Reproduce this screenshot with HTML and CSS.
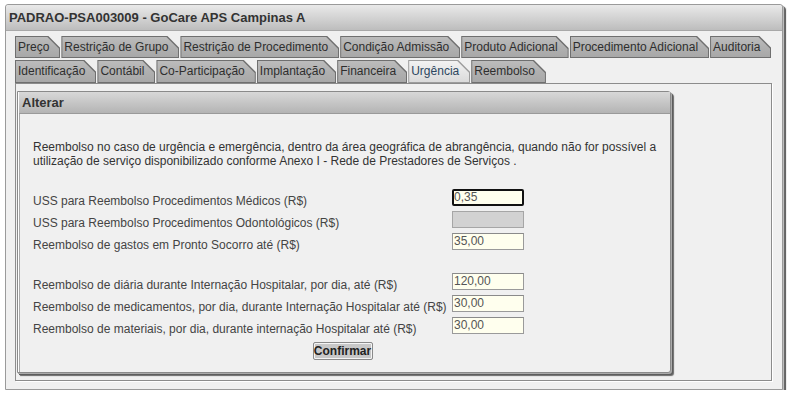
FILE: index.html
```html
<!DOCTYPE html>
<html lang="pt-BR">
<head>
<meta charset="utf-8">
<title>PADRAO-PSA003009</title>
<link rel="stylesheet" href="styles.css">
</head>
<body>
<div class="window">
  <div class="titlebar">PADRAO-PSA003009 - GoCare APS Campinas A</div>
  <div class="wbody">
    <div class="tabrow">
      <div class="tab"><span>Preço</span></div>
      <div class="tab"><span>Restrição de Grupo</span></div>
      <div class="tab"><span>Restrição de Procedimento</span></div>
      <div class="tab"><span>Condição Admissão</span></div>
      <div class="tab"><span>Produto Adicional</span></div>
      <div class="tab"><span>Procedimento Adicional</span></div>
      <div class="tab"><span>Auditoria</span></div>
    </div>
    <div class="tabrow">
      <div class="tab"><span>Identificação</span></div>
      <div class="tab"><span>Contábil</span></div>
      <div class="tab"><span>Co-Participação</span></div>
      <div class="tab"><span>Implantação</span></div>
      <div class="tab"><span>Financeira</span></div>
      <div class="tab active"><span>Urgência</span></div>
      <div class="tab"><span>Reembolso</span></div>
    </div>
    <div class="panel">
      <div class="dialog">
        <div class="dhead">Alterar</div>
        <div class="dbody">
          <p class="intro">Reembolso no caso de urgência e emergência, dentro da área geográfica de abrangência, quando não for possível a utilização de serviço disponibilizado conforme Anexo I - Rede de Prestadores de Serviços .</p>
          <table class="form">
            <tr><td class="lbl">USS para Reembolso Procedimentos Médicos (R$)</td><td><div class="inp focus">0,35</div></td></tr>
            <tr><td class="lbl">USS para Reembolso Procedimentos Odontológicos (R$)</td><td><div class="inp disabled"></div></td></tr>
            <tr><td class="lbl">Reembolso de gastos em Pronto Socorro até (R$)</td><td><div class="inp">35,00</div></td></tr>
            <tr class="spacer"><td></td><td></td></tr>
            <tr><td class="lbl">Reembolso de diária durante Internação Hospitalar, por dia, até (R$)</td><td><div class="inp">120,00</div></td></tr>
            <tr><td class="lbl">Reembolso de medicamentos, por dia, durante Internação Hospitalar até (R$)</td><td><div class="inp">30,00</div></td></tr>
            <tr><td class="lbl">Reembolso de materiais, por dia, durante internação Hospitalar até (R$)</td><td><div class="inp">30,00</div></td></tr>
          </table>
          <div class="actions"><button class="btn">Confirmar</button></div>
        </div>
      </div>
    </div>
  </div>
</div>
</body>
</html>
```

FILE: styles.css
```css
* { box-sizing: border-box; }
html, body { margin: 0; padding: 0; background: #fff; }
body {
  font-family: "Liberation Sans", Arial, sans-serif;
  font-size: 12px;
  color: #333;
}
.window {
  margin: 4px 0 0 5px;
  width: 778px;
  height: 386px;
  border: 1px solid #9a9a9a;
  border-radius: 3px 3px 0 0;
  background: #f0f0f0;
  box-shadow: 1px 1px 0 #bdbdbd, 2px 2px 0 #6a6a6a, 3px 3px 1px #555;
  display: flex;
  flex-direction: column;
}
.titlebar {
  height: 26px;
  line-height: 26px;
  padding-left: 3px;
  font-size: 13px;
  font-weight: bold;
  color: #333;
  background: linear-gradient(#e9e9e9, #cfcfcf 60%, #bdbdbd);
  border-bottom: 1px solid #a8a8a8;
  border-radius: 3px 3px 0 0;
}
.wbody {
  flex: 1;
  padding: 5px 10px 8px 9px;
  display: flex;
  flex-direction: column;
}
.tabrow {
  display: flex;
  gap: 1px;
  height: 22px;
}
.tabrow + .tabrow { margin-top: 2px; height: 23px; }
.tab {
  background: #6f6f6f;
  clip-path: polygon(0 0, calc(100% - 12px) 0, 100% 12px, 100% 100%, 0 100%);
  padding: 1px;
  display: flex;
}
.tab span {
  display: block;
  flex: 1;
  padding: 0 10px 0 2px;
  line-height: 20px;
  color: #2e2e2e;
  background: linear-gradient(#bcbcbc, #b0b0b0 50%, #a8a8a8);
  clip-path: polygon(0 0, calc(100% - 12px) 0, 100% 12px, 100% 100%, 0 100%);
  white-space: nowrap;
}
.tabrow + .tabrow .tab span { line-height: 21px; }
.tab.active { background: #9c9c9c; }
.tab.active span {
  background: linear-gradient(#f2f2f2, #e4e4e4 60%, #dadada);
  color: #2c4760;
}
.panel {
  flex: 1;
  border: 1px solid #8c8c8c;
  box-shadow: 1px 1px 0 #fff;
  background: #f0f0f0;
  padding: 7px 0 0 1px;
}
.dialog {
  width: 654px;
  height: 282px;
  border: 1px solid #8a8a8a;
  border-radius: 0 3px 3px 0;
  background: #f0f0f0;
  box-shadow: inset 1px 1px 0 #fdfdfd, inset 2px 0 0 #a0a0a0, 1px 1px 0 #aaa, 2px 2px 0 #5c5c5c, 3px 3px 1px #6a6a6a;
  display: flex;
  flex-direction: column;
}
.dhead {
  height: 22px;
  line-height: 21px;
  padding-left: 3px;
  margin-left: 1px;
  font-size: 13px;
  font-weight: bold;
  color: #333;
  background: linear-gradient(#d8d8d8, #c6c6c6 50%, #b4b4b4);
  border-bottom: 1px solid #9a9a9a;
}
.dbody {
  flex: 1;
  padding: 26px 10px 0 13px;
  border-left: 1px solid #a8a8a8;
  margin-left: 1px;
}
.intro {
  margin: 0;
  line-height: 14px;
  color: #333;
  width: 630px;
}
.form {
  margin-top: 21px;
  border-collapse: collapse;
}
.form td { padding: 0; height: 22px; vertical-align: top; }
.form .lbl { width: 419px; color: #444; padding-top: 5px; white-space: nowrap; }
.form .spacer td { height: 18px; }
.inp {
  width: 72px;
  height: 17px;
  border: 1px solid #9a9a9a;
  border-top-color: #8a8a8a;
  background: #ffffee;
  color: #555;
  line-height: 15px;
  padding-left: 1px;
}
.inp.focus {
  border: 2px solid #111;
  border-radius: 2px;
  padding-left: 0;
  line-height: 13px;
}
.inp.disabled { background: #d2d2d2; border-color: #a6a6a6; }
.actions {
  display: flex;
  justify-content: center;
  padding-right: 8px;
  margin-top: 3px;
}
.btn {
  font-family: "Liberation Sans", Arial, sans-serif;
  font-size: 12px;
  font-weight: bold;
  color: #222;
  width: 60px;
  height: 18px;
  padding: 0;
  background: #c8c8c8;
  border: 1px solid #8a8a8a;
  border-radius: 2px;
  box-shadow: inset 0 0 0 1px #f4f4f4;
}
```
